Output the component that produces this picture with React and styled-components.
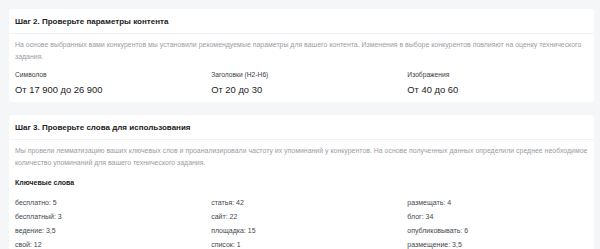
import React from "react";
import styled, { createGlobalStyle } from "styled-components";

const Global = createGlobalStyle`
  html, body { margin: 0; padding: 0; }
  body {
    background: #f5f6f8;
    font-family: "Liberation Sans", Arial, sans-serif;
    width: 600px;
    height: 249px;
    overflow: hidden;
  }
`;

const Page = styled.div`
  display: flex;
  flex-direction: column;
  gap: 13px;
  padding: 9px 6px 0 9px;
`;

const Card = styled.section`
  background: #fff;
  border-radius: 3px;
`;

const CardHeader = styled.div`
  height: 24px;
  display: flex;
  align-items: center;
  padding: 0 6px;
  border-bottom: 1px solid #f1f2f4;
  font-size: 8px;
  font-weight: 700;
  color: #222;
`;

const CardBody = styled.div`
  padding: 5px 6px 5px;
`;

const Desc = styled.p`
  margin: 0;
  font-size: 6.95px;
  line-height: 12px;
  color: #9a9da3;
`;

const Grid = styled.div`
  display: grid;
  grid-template-columns: repeat(3, 1fr);
  column-gap: 15.5px;
  margin-top: ${(p) => p.$mt || 0}px;
`;

const Param = styled.div`
  display: flex;
  flex-direction: column;
`;

const ParamLabel = styled.div`
  font-size: 6.7px;
  line-height: 12px;
  color: #3a3d42;
`;

const ParamValue = styled.div`
  font-size: 9.4px;
  line-height: 14px;
  margin-top: 2px;
  color: #222;
`;

const SubTitle = styled.div`
  font-size: 7px;
  font-weight: 700;
  color: #222;
  margin-top: 8px;
  line-height: 12px;
`;

const Word = styled.div`
  font-size: 7px;
  line-height: 14px;
  color: #44474c;
`;

const params = [
  ["Символов", "От 17 900 до 26 900"],
  ["Заголовки (H2-H6)", "От 20 до 30"],
  ["Изображения", "От 40 до 60"],
];

const words = [
  ["бесплатно: 5", "статья: 42", "размещать: 4"],
  ["бесплатный: 3", "сайт: 22", "блог: 34"],
  ["ведение: 3,5", "площадка: 15", "опубликовывать: 6"],
  ["свой: 12", "список: 1", "размещение: 3,5"],
];

export default function App() {
  return (
    <>
      <Global />
      <Page>
        <Card>
          <CardHeader>Шаг 2. Проверьте параметры контента</CardHeader>
          <CardBody>
            <Desc>
              На основе выбранных вами конкурентов мы установили рекомендуемые параметры для вашего контента. Изменения в выборе конкурентов повлияют на оценку технического задания.
            </Desc>
            <Grid $mt={6}>
              {params.map(([l, v]) => (
                <Param key={l}>
                  <ParamLabel>{l}</ParamLabel>
                  <ParamValue>{v}</ParamValue>
                </Param>
              ))}
            </Grid>
          </CardBody>
        </Card>
        <Card>
          <CardHeader>Шаг 3. Проверьте слова для использования</CardHeader>
          <CardBody>
            <Desc>
              Мы провели лемматизацию ваших ключевых слов и проанализировали частоту их упоминаний у конкурентов. На основе полученных данных определили среднее необходимое количество упоминаний для вашего технического задания.
            </Desc>
            <SubTitle>Ключевые слова</SubTitle>
            <Grid $mt={7}>
              {words.flat().map((w) => (
                <Word key={w}>{w}</Word>
              ))}
            </Grid>
          </CardBody>
        </Card>
      </Page>
    </>
  );
}
